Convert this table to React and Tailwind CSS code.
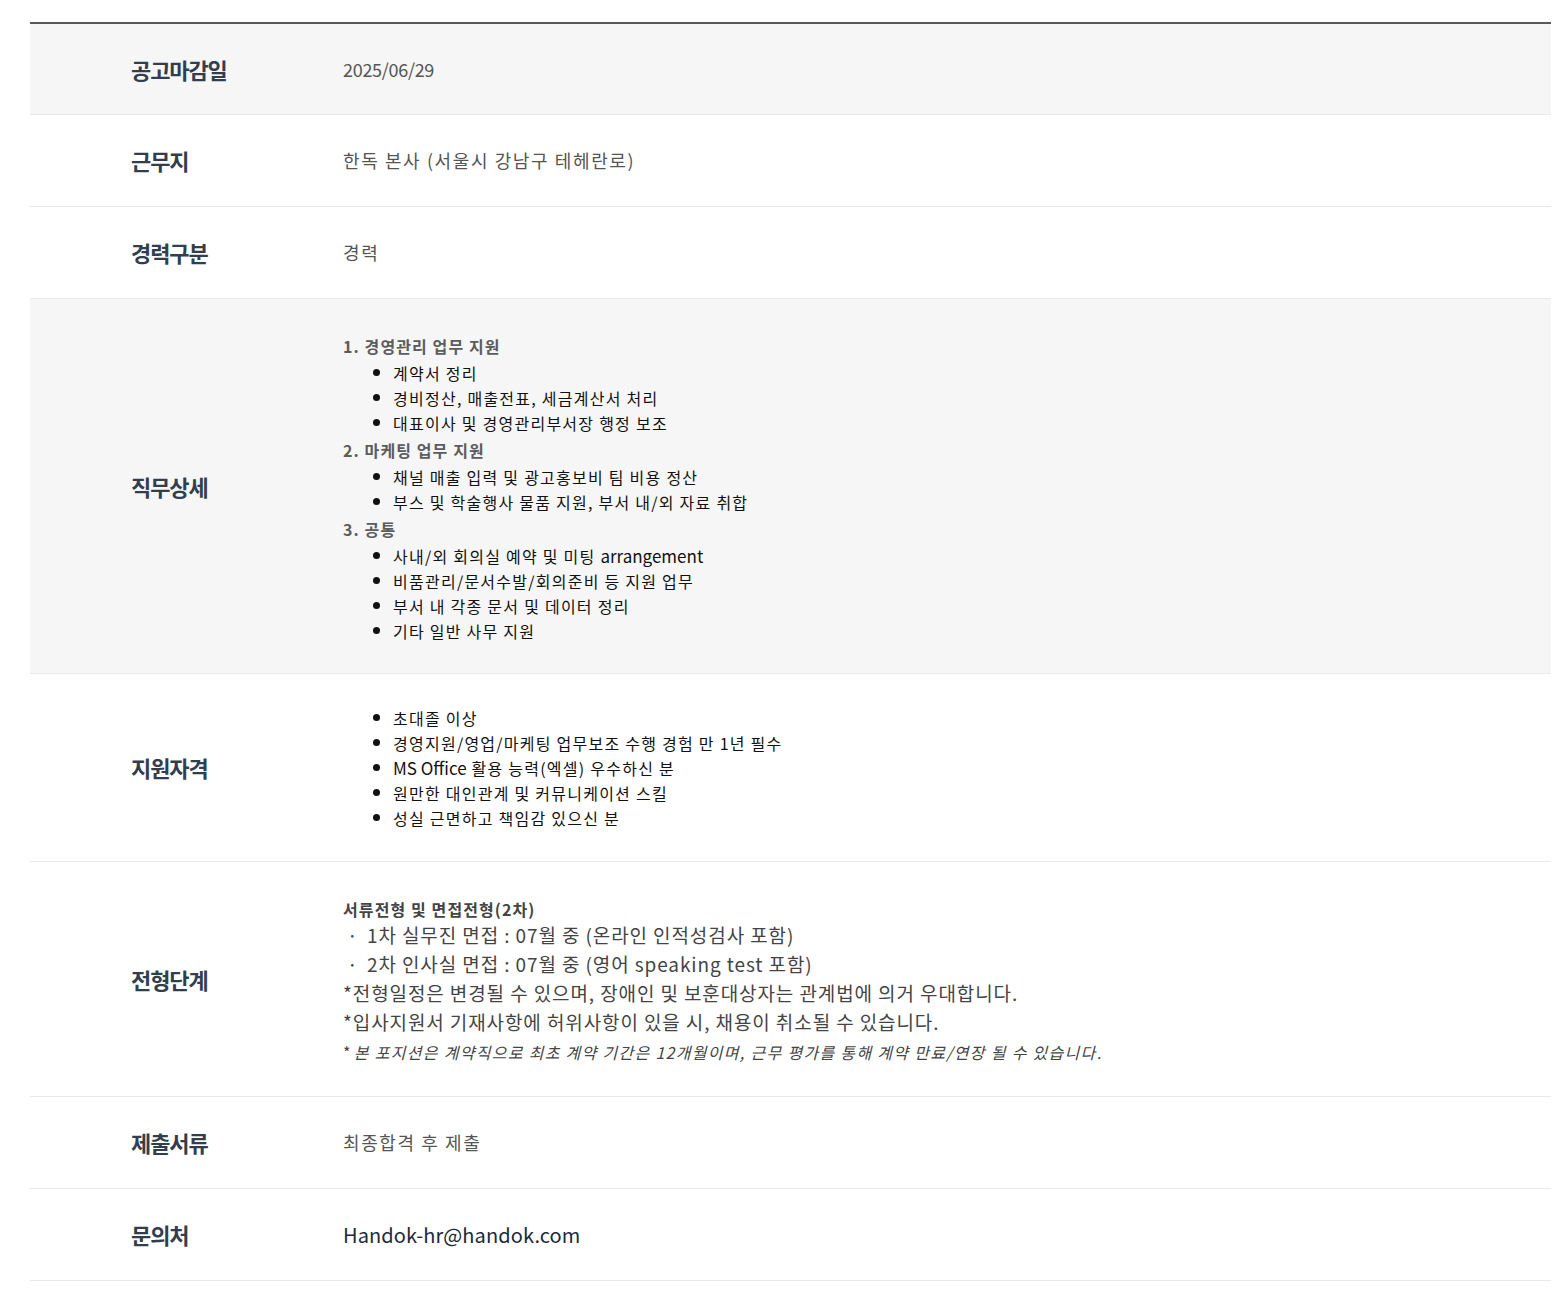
import React from "react";

const font = { fontFamily: '"Noto Sans CJK KR", "Noto Sans", sans-serif' };

function Dot() {
    return <span className="ml-[30px] mr-[13px] inline-block w-[7px] h-[7px] rounded-full bg-[#111] shrink-0" />;
}

function En({ children }) {
    return <span className="text-[17px] tracking-normal">{children}</span>;
}

function Item({ children }) {
    return (
        <li className="flex items-center h-[25px] text-[16px] text-[#111] tracking-[1.25px]">
            <Dot />
            <span>{children}</span>
        </li>
    );
}

function Row({ label, gray, h, children }) {
    return (
        <div className={`flex border-b border-[#e8e9ef] ${gray ? "bg-[#f6f6f6]" : "bg-white"}`}>
            <div className={`w-[313px] shrink-0 flex items-center pl-[101px] ${h || ""}`}>
                <span className="text-[22px] font-bold text-[#323e4e] tracking-[-1.1px]">{label}</span>
            </div>
            <div className={`flex-1 flex items-center ${h || ""}`}>{children}</div>
        </div>
    );
}

const task = [
    { head: "1. 경영관리 업무 지원", items: ["계약서 정리", "경비정산, 매출전표, 세금계산서 처리", "대표이사 및 경영관리부서장 행정 보조"] },
    { head: "2. 마케팅 업무 지원", items: ["채널 매출 입력 및 광고홍보비 팀 비용 정산", "부스 및 학술행사 물품 지원, 부서 내/외 자료 취합"] },
    {
        head: "3. 공통",
        items: [
            <>사내/외 회의실 예약 및 미팅 <En>arrangement</En></>,
            "비품관리/문서수발/회의준비 등 지원 업무",
            "부서 내 각종 문서 및 데이터 정리",
            "기타 일반 사무 지원",
        ],
    },
];

const quals = [
    "초대졸 이상",
    "경영지원/영업/마케팅 업무보조 수행 경험 만 1년 필수",
    <><En>MS Office</En> 활용 능력(엑셀) 우수하신 분</>,
    "원만한 대인관계 및 커뮤니케이션 스킬",
    "성실 근면하고 책임감 있으신 분",
];

export default function App() {
    return (
        <div className="min-h-[1311px] bg-white pt-[22px] pl-[30px] pr-[16px]" style={font}>
            <div className="border-t-2 border-[#5a5a5a]">
                <Row label="공고마감일" gray h="h-[90px]">
                    <span className="text-[18px] text-[#555] tracking-[-0.3px]">2025/06/29</span>
                </Row>
                <Row label="근무지" h="h-[91px]">
                    <span className="text-[18px] text-[#555] tracking-[1.6px]">한독 본사 (서울시 강남구 테헤란로)</span>
                </Row>
                <Row label="경력구분" h="h-[91px]">
                    <span className="text-[18px] text-[#555] tracking-[1.6px]">경력</span>
                </Row>
                <Row label="직무상세" gray>
                    <div className="pt-[32px] pb-[30px]">
                        {task.map((g) => (
                            <div key={g.head}>
                                <div className="h-[29px] flex items-center text-[16px] font-bold text-[#5c5c5c] tracking-[1.1px]">{g.head}</div>
                                <ul>
                                    {g.items.map((t, i) => (
                                        <Item key={i}>{t}</Item>
                                    ))}
                                </ul>
                            </div>
                        ))}
                    </div>
                </Row>
                <Row label="지원자격">
                    <ul className="py-[31px]">
                        {quals.map((t, i) => (
                            <Item key={i}>{t}</Item>
                        ))}
                    </ul>
                </Row>
                <Row label="전형단계">
                    <div className="pt-[34px] pb-[30px] text-[#444]">
                        <div className="h-[25px] flex items-center text-[16px] font-bold tracking-[1.1px]">서류전형 및 면접전형(2차)</div>
                        <div className="h-[29px] flex items-center text-[19px] tracking-[0.9px]">
                            <span className="w-[24px] pl-[4px]">·</span>1차 실무진 면접 : 07월 중 (온라인 인적성검사 포함)
                        </div>
                        <div className="h-[29px] flex items-center text-[19px] tracking-[0.9px]">
                            <span className="w-[24px] pl-[4px]">·</span>2차 인사실 면접 : 07월 중 (영어 speaking test 포함)
                        </div>
                        <div className="h-[29px] flex items-center text-[19px] tracking-[0.9px]">
                            *전형일정은 변경될 수 있으며, 장애인 및 보훈대상자는 관계법에 의거 우대합니다.
                        </div>
                        <div className="h-[29px] flex items-center text-[19px] tracking-[0.9px]">
                            *입사지원서 기재사항에 허위사항이 있을 시, 채용이 취소될 수 있습니다.
                        </div>
                        <div className="h-[29px] flex items-center text-[16px] tracking-[1.3px]">
                            <span className="mr-[2px]">*</span>
                            <em className="italic">본 포지션은 계약직으로 최초 계약 기간은 12개월이며, 근무 평가를 통해 계약 만료/연장 될 수 있습니다.</em>
                        </div>
                    </div>
                </Row>
                <Row label="제출서류" h="h-[91px]">
                    <span className="text-[18px] text-[#555] tracking-[1.6px]">최종합격 후 제출</span>
                </Row>
                <Row label="문의처" h="h-[91px]">
                    <span className="text-[20px] text-[#1b2a3b] tracking-[0.1px]">Handok-hr@handok.com</span>
                </Row>
            </div>
        </div>
    );
}
